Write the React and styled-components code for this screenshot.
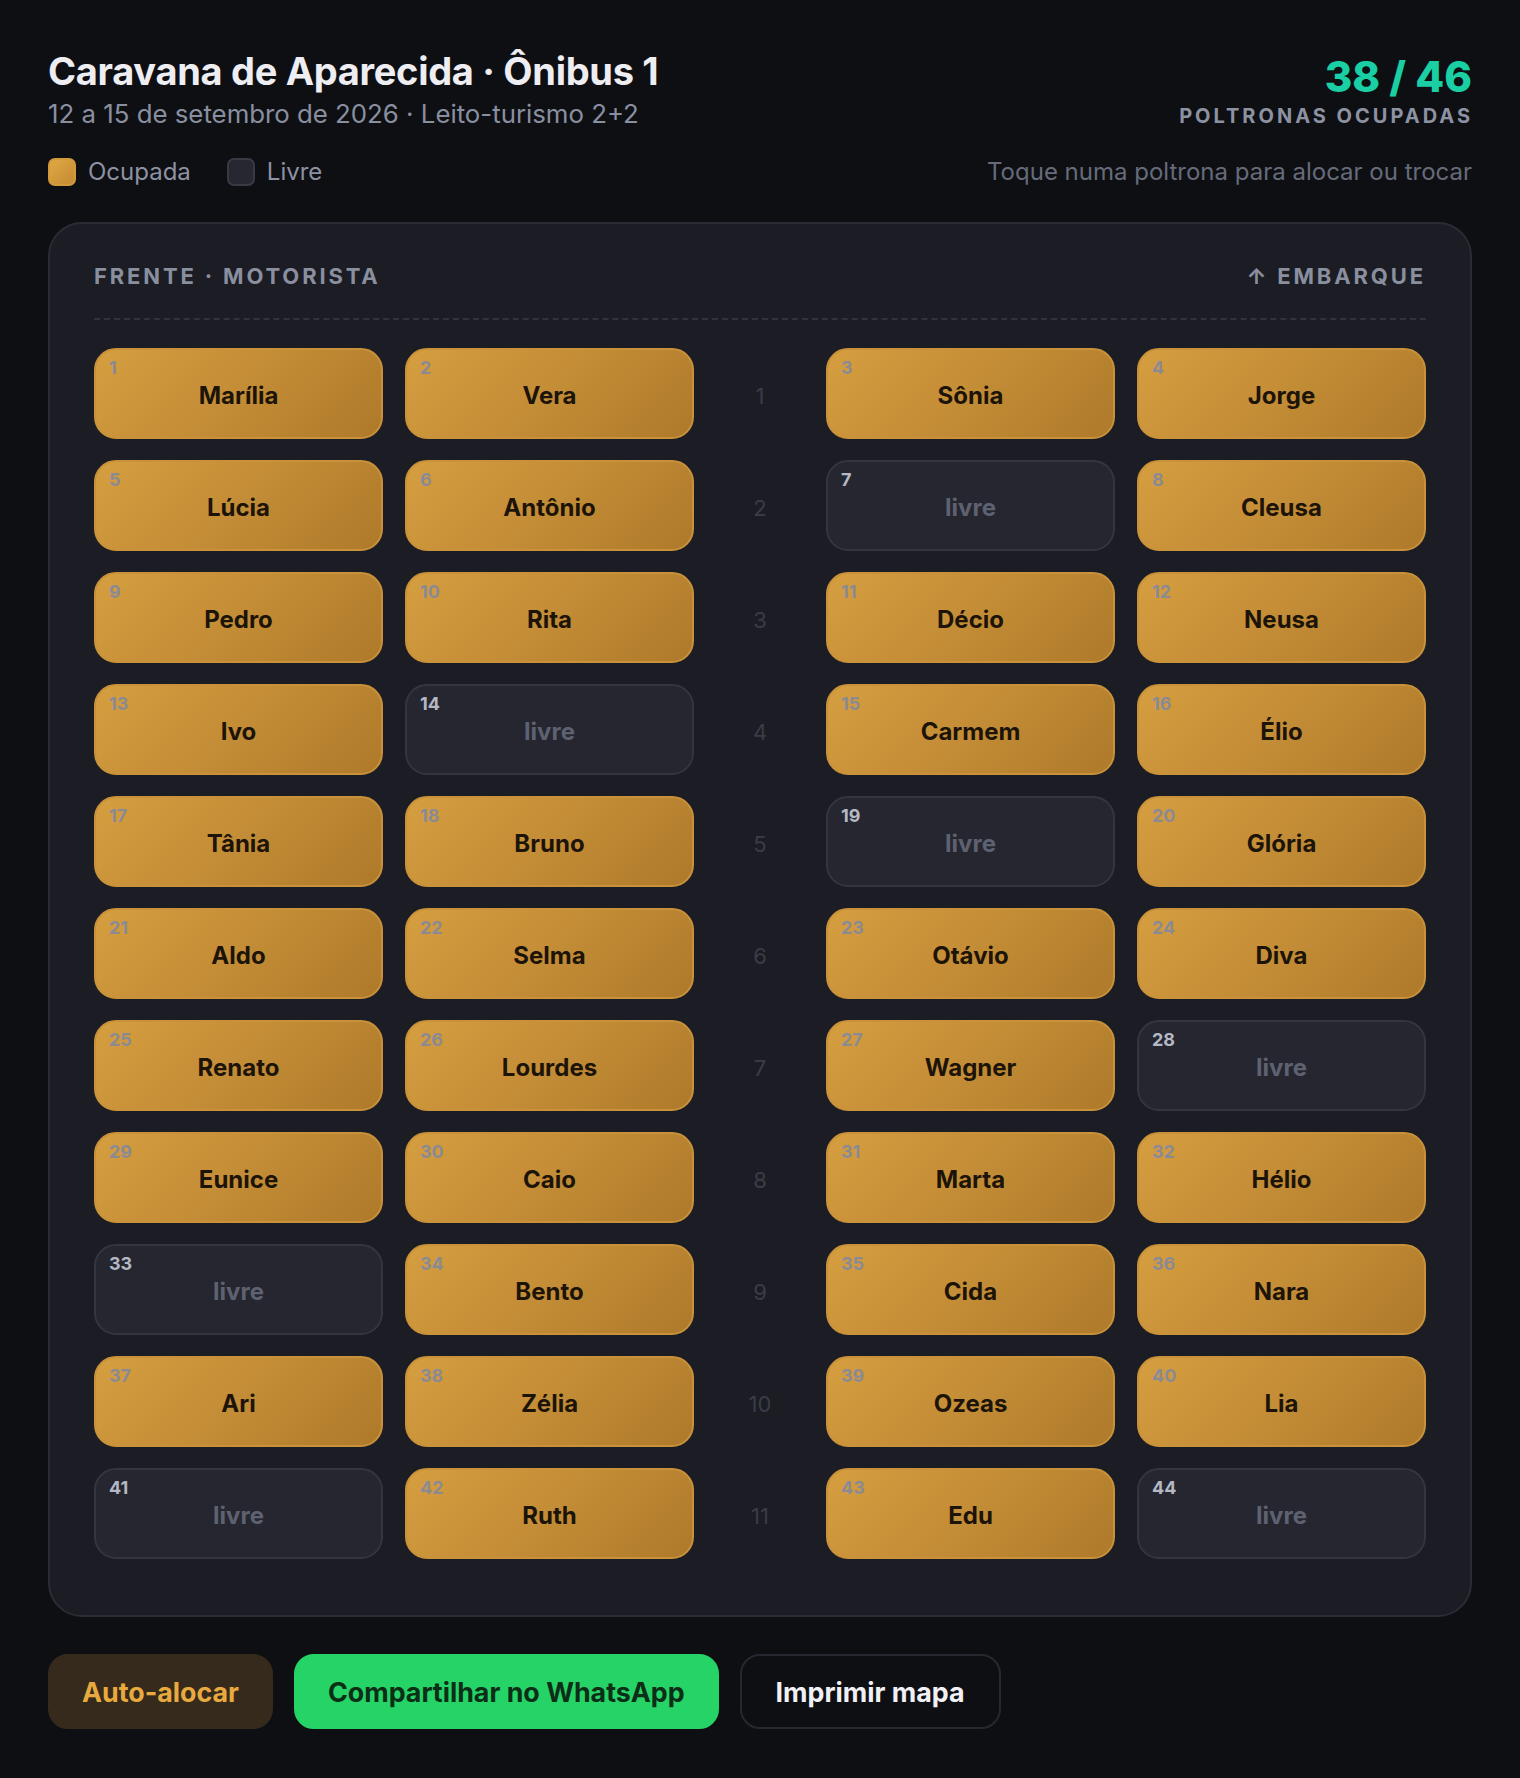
import React from 'react';
import styled, { createGlobalStyle } from 'styled-components';

const GlobalStyle = createGlobalStyle`
  * {
    box-sizing: border-box;
  }
  body {
    margin: 0;
    background: #0e0f13;
    font-family: Inter, 'Noto Sans', 'Liberation Sans', sans-serif;
  }
`;

const Page = styled.div`
  min-height: 1778px;
  padding: 48px 48px 48px;
  background: #0e0f13;
`;

const Header = styled.header`
  display: flex;
  justify-content: space-between;
  align-items: flex-start;
`;

const Title = styled.h1`
  margin: 0;
  font-size: 38px;
  line-height: 46px;
  font-weight: 700;
  letter-spacing: -0.008em;
  color: #ededf2;
`;

const Subtitle = styled.p`
  margin: 3px 0 0;
  font-size: 25.8px;
  line-height: 34px;
  color: #8a8fa0;
`;

const Stats = styled.div`
  margin-top: 7px;
  text-align: right;
`;

const Count = styled.div`
  font-size: 42px;
  line-height: 44px;
  font-weight: 800;
  color: #19cfa3;
`;

const StatsLabel = styled.div`
  margin-top: 5px;
  font-size: 20px;
  line-height: 24px;
  font-weight: 700;
  letter-spacing: 0.15em;
  margin-right: -0.05em;
  color: #8d92a3;
`;

const InfoRow = styled.div`
  margin-top: 27px;
  display: flex;
  justify-content: space-between;
  align-items: center;
`;

const Legend = styled.div`
  display: flex;
  align-items: center;
  gap: 36px;
`;

const LegendItem = styled.div`
  display: flex;
  align-items: center;
  gap: 12px;
  font-size: 24px;
  line-height: 28px;
  color: #8d92a2;
`;

const Swatch = styled.span`
  width: 28px;
  height: 28px;
  border-radius: 7px;
  background: ${({ $taken }) =>
    $taken ? 'linear-gradient(135deg, #e0a843, #c48b33)' : '#262730'};
  border: 2px solid ${({ $taken }) => ($taken ? '#d39a3c' : '#383a45')};
`;

const Hint = styled.div`
  font-size: 24px;
  line-height: 28px;
  color: #666b7a;
`;

const Bus = styled.section`
  margin-top: 36px;
  background: #1b1c24;
  border: 2px solid #2a2c35;
  border-radius: 34px;
  padding: 38px 44px 56px;
`;

const BusHead = styled.div`
  display: flex;
  justify-content: space-between;
  padding-bottom: 28px;
  border-bottom: 2px dashed #30323c;
  font-size: 22px;
  line-height: 28px;
  font-weight: 700;
  letter-spacing: 0.13em;
  color: #8a8f9f;
`;

const SeatGrid = styled.div`
  margin-top: 28px;
  display: grid;
  grid-template-columns: 1fr 1fr 88px 1fr 1fr;
  grid-auto-rows: 91px;
  column-gap: 22px;
  row-gap: 21px;
`;

const Seat = styled.button`
  position: relative;
  display: flex;
  align-items: center;
  justify-content: center;
  padding: 4px 0 0;
  border-radius: 22px;
  font-family: inherit;
  font-size: 24px;
  line-height: 28px;
  font-weight: 700;
  cursor: pointer;
  border: 2px solid ${({ $taken }) => ($taken ? '#c8913a' : '#33353f')};
  background: ${({ $taken }) =>
    $taken ? 'linear-gradient(135deg, #d59e40 0%, #c38c36 50%, #ae7a2a 100%)' : '#252630'};
  color: ${({ $taken }) => ($taken ? '#1c1409' : '#5d6170')};
`;

const SeatNo = styled.span`
  position: absolute;
  top: 7px;
  left: 13px;
  font-size: 18px;
  line-height: 22px;
  font-weight: 700;
  color: ${({ $taken }) => ($taken ? 'rgba(125, 136, 165, 0.85)' : '#b4b8c5')};
`;

const RowNo = styled.div`
  display: flex;
  align-items: center;
  justify-content: center;
  padding-top: 4px;
  font-size: 22px;
  color: #3a3d48;
`;

const Actions = styled.div`
  margin-top: 37px;
  display: flex;
  gap: 21px;
`;

const ActionButton = styled.button`
  height: 75px;
  padding: 0 ${({ $variant }) => ($variant === 'print' ? '34px' : '32px')};
  border-radius: 20px;
  font-family: inherit;
  font-size: 26.8px;
  font-weight: 700;
  cursor: pointer;
  background: ${({ $variant }) =>
    $variant === 'auto' ? '#352a1c' : $variant === 'share' ? '#25d366' : 'transparent'};
  color: ${({ $variant }) =>
    $variant === 'auto' ? '#e8a93f' : $variant === 'share' ? '#0c2e17' : '#f1f1f5'};
  border: 2px solid ${({ $variant }) =>
    $variant === 'auto' ? '#352a1c' : $variant === 'share' ? '#25d366' : '#262830'};
`;

const names = [
  'Marília', 'Vera', 'Sônia', 'Jorge',
  'Lúcia', 'Antônio', null, 'Cleusa',
  'Pedro', 'Rita', 'Décio', 'Neusa',
  'Ivo', null, 'Carmem', 'Élio',
  'Tânia', 'Bruno', null, 'Glória',
  'Aldo', 'Selma', 'Otávio', 'Diva',
  'Renato', 'Lourdes', 'Wagner', null,
  'Eunice', 'Caio', 'Marta', 'Hélio',
  null, 'Bento', 'Cida', 'Nara',
  'Ari', 'Zélia', 'Ozeas', 'Lia',
  null, 'Ruth', 'Edu', null,
];

const SeatCell = ({ n }) => {
  const name = names[n - 1];
  const taken = Boolean(name);
  return (
    <Seat $taken={taken}>
      <SeatNo $taken={taken}>{n}</SeatNo>
      {taken ? name : 'livre'}
    </Seat>
  );
};

export default function App() {
  const rows = Array.from({ length: 11 }, (_, i) => i);

  return (
    <Page>
      <GlobalStyle />
      <Header>
        <div>
          <Title>Caravana de Aparecida · Ônibus 1</Title>
          <Subtitle>12 a 15 de setembro de 2026 · Leito-turismo 2+2</Subtitle>
        </div>
        <Stats>
          <Count>38 / 46</Count>
          <StatsLabel>POLTRONAS OCUPADAS</StatsLabel>
        </Stats>
      </Header>

      <InfoRow>
        <Legend>
          <LegendItem>
            <Swatch $taken />
            Ocupada
          </LegendItem>
          <LegendItem>
            <Swatch />
            Livre
          </LegendItem>
        </Legend>
        <Hint>Toque numa poltrona para alocar ou trocar</Hint>
      </InfoRow>

      <Bus>
        <BusHead>
          <span>FRENTE · MOTORISTA</span>
          <span>↑ EMBARQUE</span>
        </BusHead>
        <SeatGrid>
          {rows.map((r) => (
            <React.Fragment key={r}>
              <SeatCell n={r * 4 + 1} />
              <SeatCell n={r * 4 + 2} />
              <RowNo>{r + 1}</RowNo>
              <SeatCell n={r * 4 + 3} />
              <SeatCell n={r * 4 + 4} />
            </React.Fragment>
          ))}
        </SeatGrid>
      </Bus>

      <Actions>
        <ActionButton $variant="auto">Auto-alocar</ActionButton>
        <ActionButton $variant="share">Compartilhar no WhatsApp</ActionButton>
        <ActionButton $variant="print">Imprimir mapa</ActionButton>
      </Actions>
    </Page>
  );
}
